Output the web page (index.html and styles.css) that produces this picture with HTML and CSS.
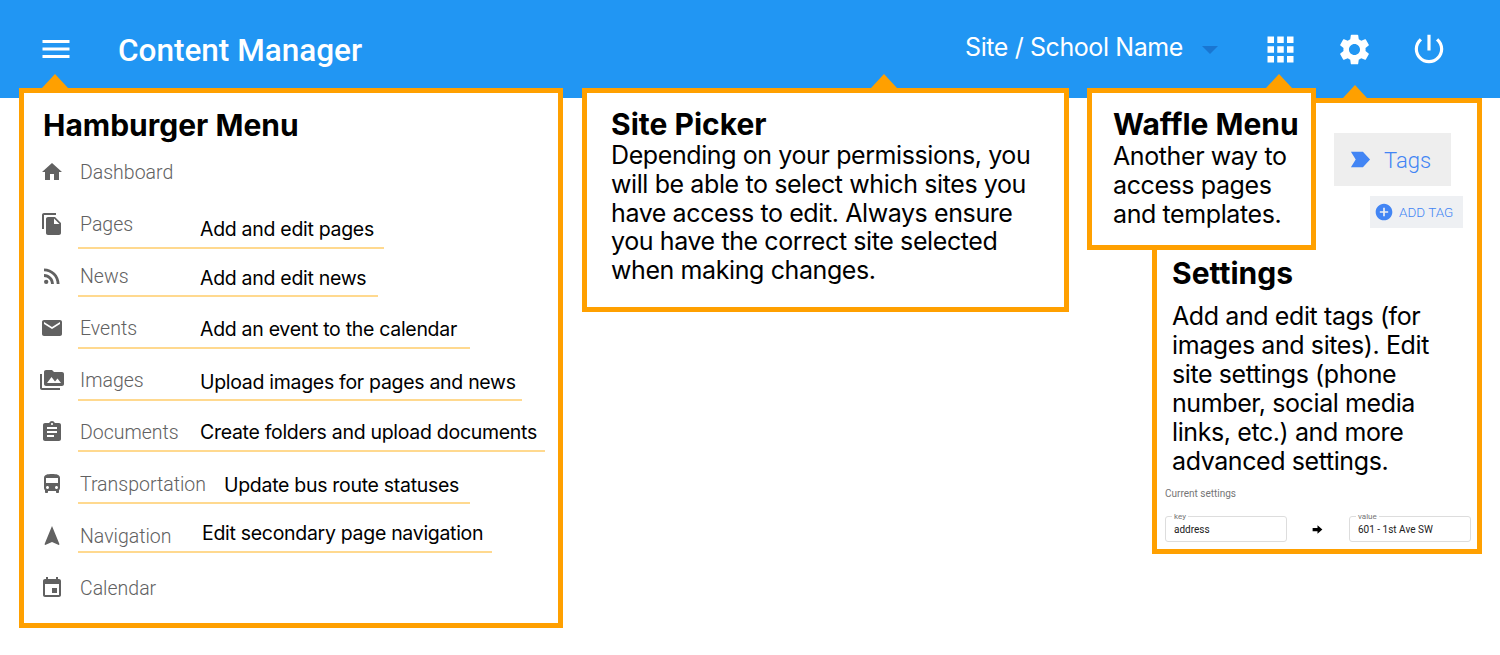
FILE: index.html
```html
<!DOCTYPE html>
<html lang="en">
<head>
    <meta charset="UTF-8">
    <meta name="viewport" content="width=device-width, initial-scale=1.0">
    <title>Content Manager</title>
    <link rel="stylesheet" href="styles.css">
</head>
<body>
    <header class="topbar">
        <svg class="menu-icon" viewBox="0 0 24 24"><path d="M3 18h18v-2H3v2zm0-5h18v-2H3v2zm0-7v2h18V6H3z"/></svg>
        <h1 class="app-title">Content Manager</h1>
        <div class="site-name">Site / School Name</div>
        <div class="site-caret"></div>
        <div class="top-action"><svg class="apps-icon" viewBox="0 0 24 24"><path d="M4 8h4V4H4v4zm6 12h4v-4h-4v4zm-6 0h4v-4H4v4zm0-6h4v-4H4v4zm6 0h4v-4h-4v4zm6-10v4h4V4h-4zm-6 4h4V4h-4v4zm6 6h4v-4h-4v4zm0 6h4v-4h-4v4z"/></svg></div>
        <div class="top-action"><svg class="gear-icon" viewBox="0 0 24 24"><path d="M19.14 12.94c.04-.3.06-.61.06-.94 0-.32-.02-.64-.07-.94l2.03-1.58c.18-.14.23-.41.12-.61l-1.92-3.32c-.12-.22-.37-.29-.59-.22l-2.39.96c-.5-.38-1.03-.7-1.62-.94l-.36-2.54c-.04-.24-.24-.41-.48-.41h-3.84c-.24 0-.43.17-.47.41l-.36 2.54c-.59.24-1.13.57-1.62.94l-2.39-.96c-.22-.08-.47 0-.59.22L2.74 8.87c-.12.21-.08.47.12.61l2.03 1.58c-.05.3-.09.63-.09.94s.02.64.07.94l-2.03 1.58c-.18.14-.23.41-.12.61l1.92 3.32c.12.22.37.29.59.22l2.39-.96c.5.38 1.03.7 1.62.94l.36 2.54c.05.24.24.41.48.41h3.84c.24 0 .44-.17.47-.41l.36-2.54c.59-.24 1.13-.56 1.62-.94l2.39.96c.22.08.47 0 .59-.22l1.92-3.32c.12-.22.07-.47-.12-.61l-2.01-1.58zM12 15.6c-1.98 0-3.6-1.62-3.6-3.6s1.62-3.6 3.6-3.6 3.6 1.62 3.6 3.6-1.62 3.6-3.6 3.6z"/></svg></div>
        <div class="top-action"><svg class="power-icon" viewBox="0 0 24 24"><path d="M13 3h-2v10h2V3zm4.83 2.17l-1.42 1.42C17.99 7.86 19 9.81 19 12c0 3.87-3.13 7-7 7s-7-3.13-7-7c0-2.19 1.01-4.14 2.58-5.42L6.17 5.17C4.23 6.82 3 9.26 3 12c0 4.97 4.03 9 9 9s9-4.03 9-9c0-2.74-1.23-5.18-3.17-6.83z"/></svg></div>
    </header>

    <!-- callouts sit on top of the app screenshot -->
    <section class="callout callout-menu">
        <h2>Hamburger Menu</h2>
        <ul class="nav-list">
            <li class="nav-row">
                <svg viewBox="0 0 24 24"><path d="M10 20v-6h4v6h5v-8h3L12 3 2 12h3v8z"/></svg>
                <div class="nav-body"><span class="nav-label">Dashboard</span></div>
            </li>
            <li class="nav-row">
                <svg viewBox="0 0 24 24"><path d="M16 1H4c-1.1 0-2 .9-2 2v14h2V3h12V1zm-1 4l6 6v10c0 1.1-.9 2-2 2H7.99C6.89 23 6 22.1 6 21l.01-14c0-1.1.89-2 1.99-2h7zm-1 7h5.5L14 6.5V12z"/></svg>
                <div class="nav-body noted note-pages"><span class="nav-label">Pages</span><span class="nav-note">Add and edit pages</span></div>
            </li>
            <li class="nav-row">
                <svg viewBox="0 0 24 24"><circle cx="6.18" cy="17.82" r="2.18"/><path d="M4 4.44v2.83c7.03 0 12.73 5.7 12.73 12.73h2.83c0-8.59-6.97-15.56-15.56-15.56zm0 5.66v2.83c3.9 0 7.07 3.17 7.07 7.07h2.83c0-5.47-4.43-9.9-9.9-9.9z"/></svg>
                <div class="nav-body noted note-news"><span class="nav-label">News</span><span class="nav-note">Add and edit news</span></div>
            </li>
            <li class="nav-row">
                <svg viewBox="0 0 24 24"><path d="M20 4H4c-1.1 0-1.99.9-1.99 2L2 18c0 1.1.9 2 2 2h16c1.1 0 2-.9 2-2V6c0-1.1-.9-2-2-2zm0 4l-8 5-8-5V6l8 5 8-5v2z"/></svg>
                <div class="nav-body noted note-events"><span class="nav-label">Events</span><span class="nav-note">Add an event to the calendar</span></div>
            </li>
            <li class="nav-row">
                <svg viewBox="0 0 24 24"><path d="M2 6H0v5h.01L0 20c0 1.1.9 2 2 2h18v-2H2V6zm20-2h-8l-2-2H6c-1.1 0-1.99.9-1.99 2L4 16c0 1.1.9 2 2 2h16c1.1 0 2-.9 2-2V6c0-1.1-.9-2-2-2zM7 15l4.5-6 3.5 4.51 2.5-3.01L21 15H7z"/></svg>
                <div class="nav-body noted note-images"><span class="nav-label">Images</span><span class="nav-note">Upload images for pages and news</span></div>
            </li>
            <li class="nav-row">
                <svg viewBox="0 0 24 24"><path d="M19 3h-4.18C14.4 1.84 13.3 1 12 1c-1.3 0-2.4.84-2.82 2H5c-1.1 0-2 .9-2 2v14c0 1.1.9 2 2 2h14c1.1 0 2-.9 2-2V5c0-1.1-.9-2-2-2zm-7 0c.55 0 1 .45 1 1s-.45 1-1 1-1-.45-1-1 .45-1 1-1zm2 14H7v-2h7v2zm3-4H7v-2h10v2zm0-4H7V7h10v2z"/></svg>
                <div class="nav-body noted note-documents"><span class="nav-label">Documents</span><span class="nav-note">Create folders and upload documents</span></div>
            </li>
            <li class="nav-row">
                <svg viewBox="0 0 24 24"><path d="M4 16c0 .88.39 1.67 1 2.22V20c0 .55.45 1 1 1h1c.55 0 1-.45 1-1v-1h8v1c0 .55.45 1 1 1h1c.55 0 1-.45 1-1v-1.78c.61-.55 1-1.34 1-2.22V6c0-3.5-3.58-4-8-4s-8 .5-8 4v10zm3.5 1c-.83 0-1.5-.67-1.5-1.5S6.67 14 7.5 14s1.5.67 1.5 1.5S8.33 17 7.5 17zm9 0c-.83 0-1.5-.67-1.5-1.5s.67-1.5 1.5-1.5 1.5.67 1.5 1.5-.67 1.5-1.5 1.5zm1.5-6H6V6h12v5z"/></svg>
                <div class="nav-body noted note-transport"><span class="nav-label">Transportation</span><span class="nav-note">Update bus route statuses</span></div>
            </li>
            <li class="nav-row">
                <svg viewBox="0 0 24 24"><path d="M12 2L4.5 20.29l.71.71L12 18l6.79 3 .71-.71z"/></svg>
                <div class="nav-body noted note-navigation"><span class="nav-label">Navigation</span><span class="nav-note">Edit secondary page navigation</span></div>
            </li>
            <li class="nav-row">
                <svg viewBox="0 0 24 24"><path d="M17 12h-5v5h5v-5zM16 1v2H8V1H6v2H5c-1.11 0-1.99.9-1.99 2L3 19c0 1.1.89 2 2 2h14c1.1 0 2-.9 2-2V5c0-1.1-.9-2-2-2h-1V1h-2zm3 18H5V8h14v11z"/></svg>
                <div class="nav-body"><span class="nav-label">Calendar</span></div>
            </li>
        </ul>
    </section>

    <section class="callout callout-site">
        <h2>Site Picker</h2>
        <p>Depending on your permissions, you will be able to select which sites you have access to edit. Always ensure you have the correct site selected when making changes.</p>
    </section>

    <section class="callout callout-settings">
        <div class="tag-chip">
            <svg viewBox="0 0 24 24"><path d="M2 4h12.5L22 12l-7.5 8H2l5-8z"/></svg>
            <span>Tags</span>
        </div>
        <div class="add-tag">
            <svg viewBox="0 0 24 24"><path d="M12 2C6.48 2 2 6.48 2 12s4.48 10 10 10 10-4.48 10-10S17.52 2 12 2zm5 11h-4v4h-2v-4H7v-2h4V7h2v4h4v2z"/></svg>
            <span>ADD TAG</span>
        </div>
        <h2>Settings</h2>
        <p>Add and edit tags (for images and sites). Edit site settings (phone number, social media links, etc.) and more advanced settings.</p>
        <div class="current-title">Current settings</div>
        <div class="field-row">
            <div class="field"><span class="field-label">key</span>address</div>
            <svg class="field-arrow" viewBox="0 0 24 24"><path d="M12 4v5H3v6h9v5l9-8z"/></svg>
            <div class="field"><span class="field-label">value</span>601 - 1st Ave SW</div>
        </div>
    </section>

    <section class="callout callout-waffle">
        <h2>Waffle Menu</h2>
        <p>Another way to access pages and templates.</p>
    </section>
</body>
</html>
```

FILE: styles.css
```css
* {
    box-sizing: border-box;
}
body {
    margin: 0;
    height: 655px;
    overflow: hidden;
    position: relative;
    background-color: white;
    font-family: Inter, "Liberation Sans", sans-serif;
    color: black;
}

/* top bar */
.topbar {
    display: flex;
    align-items: center;
    height: 98px;
    padding-left: 38px;
    padding-right: 35px;
    background-color: #2196f3;
    color: white;
}
.topbar svg {
    fill: white;
    display: block;
}
.menu-icon {
    width: 36px;
    height: 36px;
}
.app-title {
    margin: 2px 0 0 44px;
    font-family: Roboto, sans-serif;
    font-size: 31.5px;
    font-weight: 500;
}
.site-name {
    margin-left: auto;
    margin-bottom: 4px;
    font-size: 25px;
    letter-spacing: -0.4px;
}
.site-caret {
    margin-left: 19px;
    margin-right: 25px;
    margin-top: 2px;
    border-left: 8px solid transparent;
    border-right: 8px solid transparent;
    border-top: 8px solid #1976d2;
}
.top-action {
    width: 74px;
    display: flex;
    justify-content: center;
}
.apps-icon {
    width: 39px;
    height: 39px;
}
.gear-icon {
    width: 37px;
    height: 37px;
}
.power-icon {
    width: 38px;
    height: 38px;
    margin-left: 2px;
}

/* callouts */
.callout {
    position: absolute;
    background-color: white;
    border: 5px solid #ffa000;
}
.callout::before {
    content: "";
    position: absolute;
    border-left: 13px solid transparent;
    border-right: 13px solid transparent;
    border-bottom: 14px solid #ffa000;
}
.callout h2 {
    margin: 0;
    font-size: 30px;
    line-height: 36px;
    font-weight: 700;
}
.callout p {
    margin: 0;
    font-size: 25px;
    line-height: 29px;
    letter-spacing: -0.4px;
}
.callout-menu {
    left: 19px;
    top: 88px;
    width: 544px;
    height: 540px;
    padding-top: 14px;
}
.callout-menu::before {
    left: 18px;
    top: -19px;
}
.callout-menu h2 {
    margin-left: 19px;
    margin-bottom: 3px;
}
.callout-site {
    left: 582px;
    top: 88px;
    width: 487px;
    height: 224px;
    padding: 13px 20px 0 24px;
}
.callout-site::before {
    left: 284px;
    top: -19px;
}
.callout-site p {
    margin-top: -1px;
    line-height: 28.8px;
}
.callout-waffle {
    left: 1087px;
    top: 88px;
    width: 229px;
    height: 162px;
    padding: 13px 0 0 21px;
}
.callout-waffle::before {
    left: 174px;
    top: -19px;
}
.callout-settings {
    left: 1152px;
    top: 98px;
    width: 330px;
    height: 456px;
    padding-top: 30px;
    display: flex;
    flex-direction: column;
}
.callout-settings::before {
    left: 186px;
    top: -18px;
    border-left-width: 12px;
    border-right-width: 12px;
    border-bottom-width: 13px;
}
.callout-settings h2 {
    margin: 27px 0 11px 15px;
}
.callout-settings p {
    margin-left: 15px;
    margin-right: 20px;
}

/* hamburger menu list */
.nav-list {
    list-style: none;
    margin: 0;
    padding: 0;
}
.nav-row {
    display: flex;
    height: 52px;
    align-items: center;
    padding-left: 16px;
}
.nav-row svg {
    width: 24px;
    height: 24px;
    flex-shrink: 0;
    fill: #616161;
}
.nav-body {
    display: flex;
    align-items: flex-start;
    align-self: flex-start;
    margin-left: 14px;
}
.nav-label {
    padding-left: 2px;
    flex-shrink: 0;
    width: 122px;
    font-family: Roboto, sans-serif;
    font-size: 19.5px;
    line-height: 54px;
    font-weight: 300;
    color: #616161;
}
.nav-body.noted {
    border-bottom: 2px solid #ffd98f;
}
.nav-note {
    font-size: 19.5px;
    line-height: 24px;
    letter-spacing: -0.3px;
    white-space: nowrap;
}
/* the notes were placed by hand on the original, each row differs a bit */
.note-pages { width: 306px; height: 51px; }
.note-pages .nav-note { margin-top: 19px; }
.note-news { width: 300px; height: 47px; }
.note-news .nav-note { margin-top: 16px; }
.note-events { width: 392px; height: 47px; }
.note-events .nav-note { margin-top: 15px; }
.note-images { width: 444px; height: 47px; }
.note-images .nav-note { margin-top: 16px; }
.note-documents { width: 467px; height: 46px; }
.note-documents .nav-note { margin-top: 14px; }
.note-transport { width: 392px; height: 46px; }
.note-transport .nav-label { width: 146px; }
.note-transport .nav-note { margin-top: 15px; }
.note-navigation { width: 414px; height: 43px; }
.note-navigation .nav-label { width: 124px; }
.note-navigation .nav-note { margin-top: 11px; }

/* settings bits */
.tag-chip {
    align-self: flex-end;
    display: flex;
    align-items: center;
    width: 117px;
    height: 53px;
    margin-right: 26px;
    padding-left: 15px;
    padding-top: 2px;
    background-color: #eeeeee;
    font-family: Roboto, sans-serif;
    font-size: 22px;
    font-weight: 300;
    color: #4285f4;
}
.tag-chip svg {
    width: 23px;
    height: 23px;
    margin-right: 12px;
    margin-top: -2px;
    fill: #4285f4;
}
.add-tag {
    align-self: flex-end;
    display: flex;
    align-items: center;
    width: 93px;
    height: 32px;
    margin-top: 10px;
    margin-right: 14px;
    padding-left: 4px;
    background-color: #eef0f3;
    font-family: Roboto, sans-serif;
    font-size: 13.5px;
    font-weight: 300;
    color: #4285f4;
}
.add-tag svg {
    width: 20px;
    height: 20px;
    margin-right: 5px;
    fill: #4285f4;
}
.current-title {
    margin: 12px 0 0 8px;
    font-family: Roboto, sans-serif;
    font-size: 10px;
    line-height: 12px;
    color: #757575;
}
.field-row {
    display: flex;
    align-items: center;
    justify-content: space-between;
    margin: 16px 6px 0 8px;
}
.field {
    position: relative;
    width: 122px;
    height: 26px;
    padding: 7px 0 0 8px;
    border: 1px solid #dddddd;
    border-radius: 3px;
    font-family: Roboto, sans-serif;
    font-size: 10px;
    line-height: 12px;
    color: #212121;
}
.field-label {
    position: absolute;
    left: 6px;
    top: -5px;
    padding: 0 2px;
    background-color: white;
    font-size: 8px;
    line-height: 9px;
    color: #757575;
}
.field-arrow {
    width: 13px;
    height: 13px;
    margin-right: 1px;
    fill: black;
}
```
